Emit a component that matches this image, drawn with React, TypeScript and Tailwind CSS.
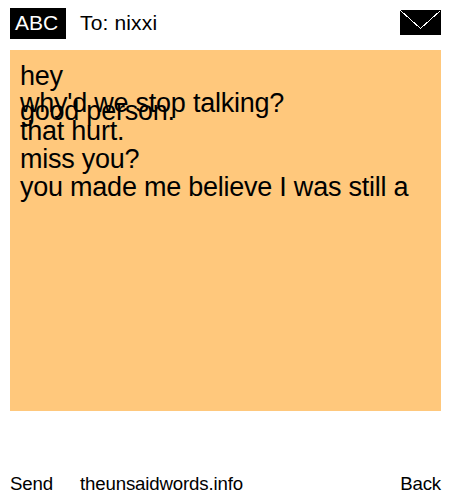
function EnvelopeIcon() {
  return (
    <svg className="block h-[25px] w-[41px]" viewBox="0 0 41 25" fill="none" shapeRendering="crispEdges">
      <rect width="41" height="25" fill="black" />
      <path d="M0.5 0.5L20.5 18.5L40.5 0.5" stroke="white" strokeWidth={1} />
    </svg>
  )
}

const lines = [
  'hey',
  "why'd we stop talking?",
  'that hurt.',
  'miss you?',
  'you made me believe I was still a',
]

export default function App() {
  return (
    <div className="flex h-[500px] w-[450px] flex-col bg-white font-['Liberation_Sans',Arial,sans-serif] text-black">
      <header className="flex h-[50px] items-start pt-2 pr-[9px] pl-[10px]">
        <div className="h-[31px] w-14 bg-black pl-[5px] text-[21px] leading-[29px] text-white">ABC</div>
        <div className="pl-[14px] text-[21px] leading-[29px] tracking-[0.15px]">To: nixxi</div>
        <div className="mt-[2px] ml-auto">
          <EnvelopeIcon />
        </div>
      </header>

      <main className="relative mr-[9px] ml-[10px] h-[361px] bg-[#ffc87c] pt-[12px] pl-[10px] text-[27px] leading-[28px] tracking-[-0.24px] whitespace-nowrap">
        {lines.map((line) => (
          <p key={line} className="first:h-[27px]">{line}</p>
        ))}
        <p className="absolute top-[47px] left-[10px]">good person.</p>
      </main>

      <footer className="mt-auto flex h-[33px] items-center pr-[9px] pl-[10px] text-[18.67px] leading-[33px] tracking-[-0.16px]">
        <span className="w-[70px]">Send</span>
        <span>theunsaidwords.info</span>
        <span className="ml-auto">Back</span>
      </footer>
    </div>
  )
}
